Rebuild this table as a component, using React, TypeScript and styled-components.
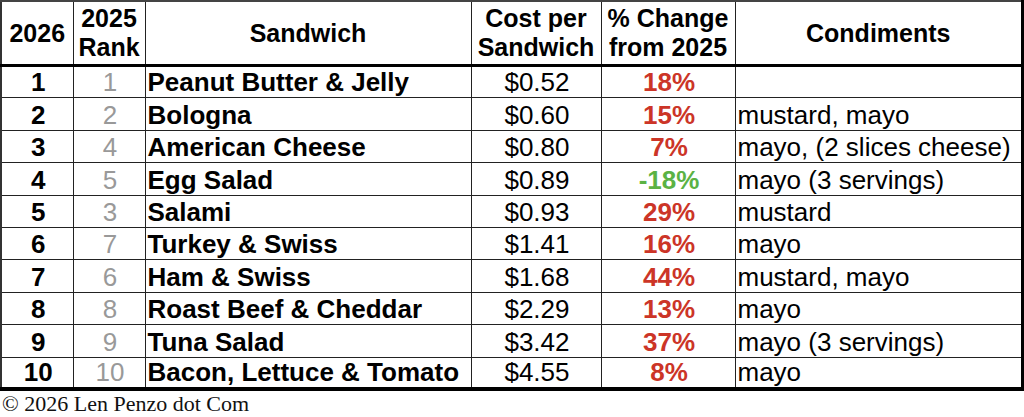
import React from 'react';
import styled, { createGlobalStyle } from 'styled-components';

type Row = {
  rank: number;
  prev: number;
  name: string;
  cost: string;
  change: number;
  condiments: string;
};

const rows: Row[] = [
  { rank: 1, prev: 1, name: 'Peanut Butter & Jelly', cost: '$0.52', change: 18, condiments: '' },
  { rank: 2, prev: 2, name: 'Bologna', cost: '$0.60', change: 15, condiments: 'mustard, mayo' },
  { rank: 3, prev: 4, name: 'American Cheese', cost: '$0.80', change: 7, condiments: 'mayo, (2 slices cheese)' },
  { rank: 4, prev: 5, name: 'Egg Salad', cost: '$0.89', change: -18, condiments: 'mayo (3 servings)' },
  { rank: 5, prev: 3, name: 'Salami', cost: '$0.93', change: 29, condiments: 'mustard' },
  { rank: 6, prev: 7, name: 'Turkey & Swiss', cost: '$1.41', change: 16, condiments: 'mayo' },
  { rank: 7, prev: 6, name: 'Ham & Swiss', cost: '$1.68', change: 44, condiments: 'mustard, mayo' },
  { rank: 8, prev: 8, name: 'Roast Beef & Cheddar', cost: '$2.29', change: 13, condiments: 'mayo' },
  { rank: 9, prev: 9, name: 'Tuna Salad', cost: '$3.42', change: 37, condiments: 'mayo (3 servings)' },
  { rank: 10, prev: 10, name: 'Bacon, Lettuce & Tomato', cost: '$4.55', change: 8, condiments: 'mayo' },
];

const GlobalStyle = createGlobalStyle`
  body {
    margin: 0;
    background: #fff;
    font-family: "Liberation Sans", Arial, sans-serif;
    color: #000;
  }
`;

const Sheet = styled.div`
  width: 1024px;
  height: 417px;
  overflow: hidden;
  background: #fff;
`;

const Table = styled.table`
  width: 1024px;
  border-collapse: collapse;
  table-layout: fixed;
  border-top: 2px solid #444;
  border-left: 2px solid #333;
  border-right: 3px solid #000;
  border-bottom: 4px solid #000;
`;

const HeadCell = styled.th`
  height: 62px;
  padding: 0;
  border: 1px solid #222;
  border-bottom: 3px solid #000;
  font-size: 25px;
  line-height: 29px;
  font-weight: bold;
  text-align: center;
  vertical-align: middle;
  white-space: nowrap;
`;

const BodyRow = styled.tr`
  height: 32.4px;
`;

const Cell = styled.td<{ $align?: 'left' | 'center'; $bold?: boolean; $color?: string }>`
  padding: 0 0 1px 2px;
  border: 1px solid #222;
  font-size: 26px;
  line-height: 28px;
  font-weight: ${(p) => (p.$bold ? 'bold' : 'normal')};
  text-align: ${(p) => p.$align || 'center'};
  color: ${(p) => p.$color || '#000'};
  white-space: nowrap;
  overflow: hidden;
  vertical-align: bottom;
`;

const Footer = styled.div`
  padding: 1px 0 0 2px;
  font-family: "Liberation Serif", "Times New Roman", serif;
  font-size: 22px;
  line-height: 24px;
  color: #111;
`;

const changeColor = (n: number) => (n < 0 ? '#5bb244' : '#cc3527');

const App: React.FC = () => (
  <Sheet>
    <GlobalStyle />
    <Table>
      <colgroup>
        <col style={{ width: 72 }} />
        <col style={{ width: 72 }} />
        <col style={{ width: 326 }} />
        <col style={{ width: 130 }} />
        <col style={{ width: 134 }} />
        <col />
      </colgroup>
      <thead>
        <tr>
          <HeadCell>2026</HeadCell>
          <HeadCell>
            2025
            <br />
            Rank
          </HeadCell>
          <HeadCell>Sandwich</HeadCell>
          <HeadCell>
            Cost per
            <br />
            Sandwich
          </HeadCell>
          <HeadCell>
            % Change
            <br />
            from 2025
          </HeadCell>
          <HeadCell>Condiments</HeadCell>
        </tr>
      </thead>
      <tbody>
        {rows.map((r) => (
          <BodyRow key={r.rank}>
            <Cell $bold>{r.rank}</Cell>
            <Cell $color="#999">{r.prev}</Cell>
            <Cell $align="left" $bold>
              {r.name}
            </Cell>
            <Cell>{r.cost}</Cell>
            <Cell $bold $color={changeColor(r.change)}>
              {r.change}%
            </Cell>
            <Cell $align="left">{r.condiments}</Cell>
          </BodyRow>
        ))}
      </tbody>
    </Table>
    <Footer>© 2026 Len Penzo dot Com</Footer>
  </Sheet>
);

export default App;
